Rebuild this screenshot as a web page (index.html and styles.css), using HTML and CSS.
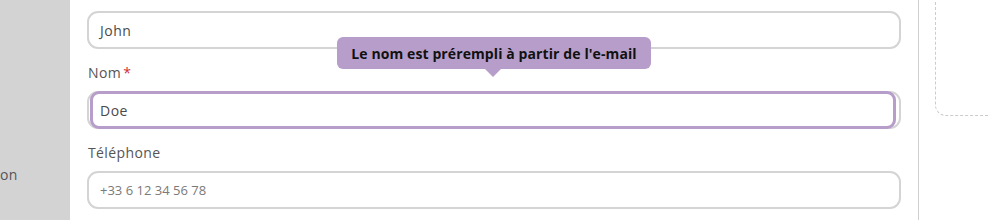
FILE: index.html
```html
<!DOCTYPE html>
<html lang="fr">
<head>
<meta charset="utf-8">
<link rel="stylesheet" href="styles.css">
</head>
<body>
<div class="page">
  <aside class="sidebar"><span class="side-text">on</span></aside>
  <main class="main">
    <div class="field first">
      <div class="input"><span class="value">John</span></div>
    </div>
    <div class="field has-tip">
      <label class="label">Nom<span class="req">*</span></label>
      <div class="input focus-wrap">
        <div class="focused"><span class="value">Doe</span></div>
      </div>
      <div class="tooltip">Le nom est prérempli à partir de l'e-mail</div>
    </div>
    <div class="field">
      <label class="label">Téléphone</label>
      <div class="input"><span class="placeholder">+33 6 12 34 56 78</span></div>
    </div>
  </main>
  <section class="right">
    <div class="dropzone"></div>
  </section>
</div>
</body>
</html>
```
FILE: styles.css
```css
html, body {
  margin: 0;
  padding: 0;
  background: #ffffff;
}
body {
  font-family: "Open Sans", "DejaVu Sans", sans-serif;
  color: #4a4a4a;
}
.page {
  display: flex;
  height: 220px;
  overflow: hidden;
}
.sidebar {
  width: 70px;
  flex: none;
  background: #d3d3d3;
  padding-top: 165px;
  box-sizing: border-box;
}
.side-text {
  font-size: 14px;
  color: #555555;
  line-height: 20px;
  display: block;
  letter-spacing: 0.3px;
}
.main {
  flex: none;
  width: 849px;
  box-sizing: border-box;
  padding: 11px 17px 0 17px;
  border-right: 1px solid #cfcfcf;
}
.field {
  position: relative;
  display: flex;
  flex-direction: column;
  margin-top: 15px;
}
.field.first {
  margin-top: 0;
}
.label {
  font-size: 14px;
  line-height: 18px;
  color: #555555;
  margin: 0 0 9px 1px;
  letter-spacing: 0.4px;
}
.req {
  color: #d0312d;
  margin-left: 2px;
}
.input {
  height: 38px;
  box-sizing: border-box;
  border: 2px solid #d4d4d4;
  border-radius: 11px;
  display: flex;
  align-items: center;
  padding: 0 11px;
  font-size: 14px;
  background: #ffffff;
}
.value {
  color: #4a4a4a;
  letter-spacing: 0.5px;
}
.placeholder {
  color: #7a7a7a;
  font-size: 13px;
}
.focus-wrap {
  padding: 0;
  align-items: stretch;
}
.focused {
  flex: 1;
  margin: -2px 3px -2px 1px;
  border: 3px solid #b79dca;
  border-radius: 9px;
  display: flex;
  align-items: center;
  padding: 0 7px;
}
.tooltip {
  position: absolute;
  left: 250px;
  top: -27px;
  width: 314px;
  height: 32px;
  box-sizing: border-box;
  background: #b79dca;
  color: #111111;
  border-radius: 6px;
  font-weight: 700;
  font-size: 14px;
  letter-spacing: 0.1px;
  display: flex;
  align-items: center;
  justify-content: center;
}
.tooltip::after {
  content: "";
  position: absolute;
  left: 148px;
  bottom: -8px;
  border-left: 8px solid transparent;
  border-right: 8px solid transparent;
  border-top: 8px solid #b79dca;
}
.right {
  flex: 1;
  padding-left: 16px;
}
.dropzone {
  margin-top: -20px;
  height: 136px;
  box-sizing: border-box;
  border: 1px dashed #cccccc;
  border-right: none;
  border-radius: 0 0 0 11px;
}
```
